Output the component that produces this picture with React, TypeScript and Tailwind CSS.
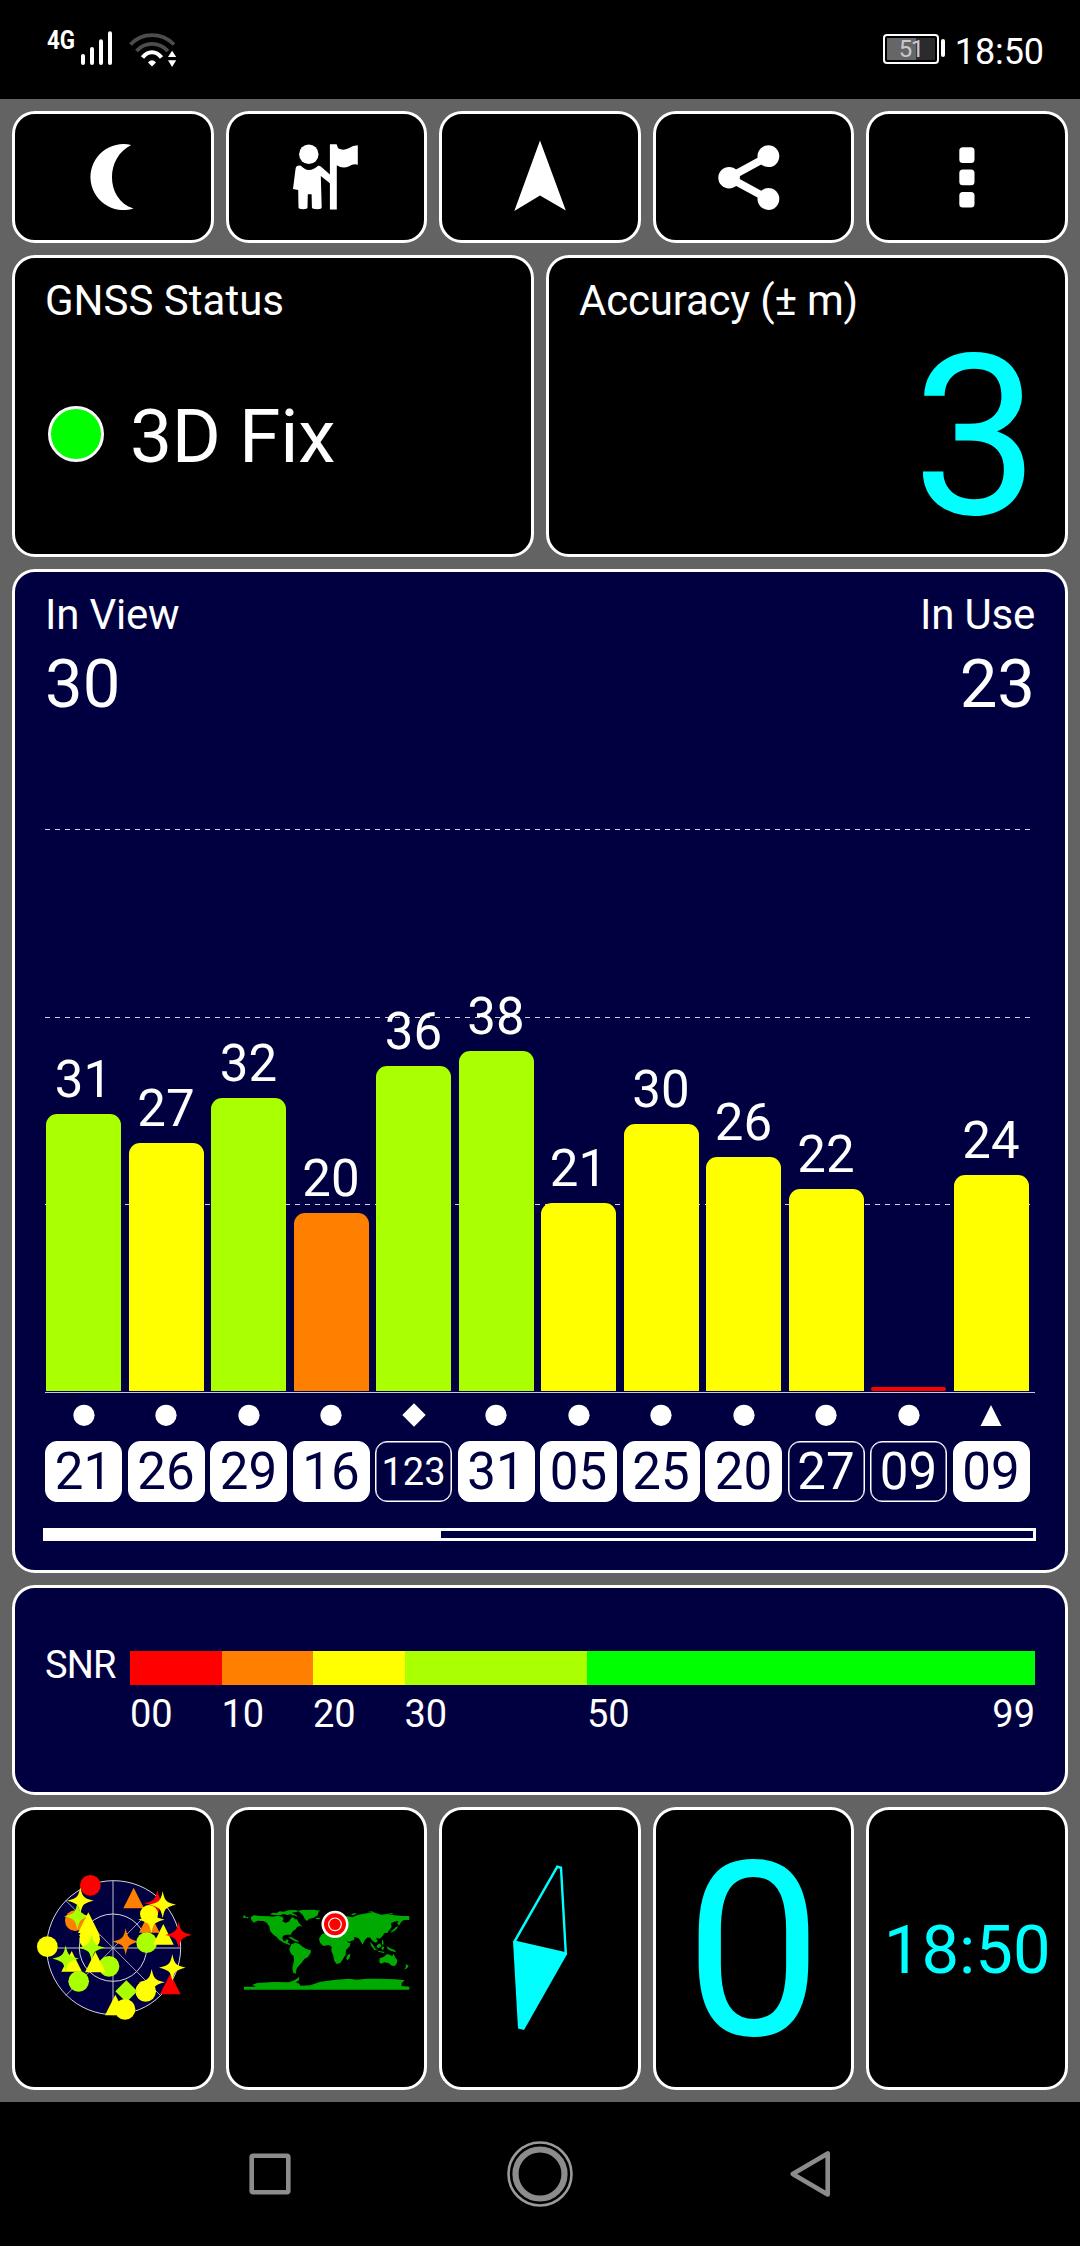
import type { ReactNode } from "react";
import clsx from "clsx";

type Shape = "circle" | "diamond" | "triangle";

const SATELLITES: {
  id: string;
  snr?: number;
  height: number;
  color: string;
  shape: Shape;
  used: boolean;
}[] = [
  { id: "21", snr: 31, height: 277, color: "bg-[#aaff00]", shape: "circle", used: true },
  { id: "26", snr: 27, height: 248, color: "bg-[#ffff00]", shape: "circle", used: true },
  { id: "29", snr: 32, height: 293, color: "bg-[#aaff00]", shape: "circle", used: true },
  { id: "16", snr: 20, height: 178, color: "bg-[#ff8000]", shape: "circle", used: true },
  { id: "123", snr: 36, height: 325, color: "bg-[#aaff00]", shape: "diamond", used: false },
  { id: "31", snr: 38, height: 340, color: "bg-[#aaff00]", shape: "circle", used: true },
  { id: "05", snr: 21, height: 188, color: "bg-[#ffff00]", shape: "circle", used: true },
  { id: "25", snr: 30, height: 267, color: "bg-[#ffff00]", shape: "circle", used: true },
  { id: "20", snr: 26, height: 234, color: "bg-[#ffff00]", shape: "circle", used: true },
  { id: "27", snr: 22, height: 202, color: "bg-[#ffff00]", shape: "circle", used: false },
  { id: "09", height: 4, color: "bg-[#ff0000]", shape: "circle", used: false },
  { id: "09", snr: 24, height: 216, color: "bg-[#ffff00]", shape: "triangle", used: true },
];

const SNR_SCALE = [
  { from: "00", width: "w-[91.5px]", color: "bg-[#ff0000]" },
  { from: "10", width: "w-[91.5px]", color: "bg-[#ff8000]" },
  { from: "20", width: "w-[91.5px]", color: "bg-[#ffff00]" },
  { from: "30", width: "w-[182.5px]", color: "bg-[#aaff00]" },
  { from: "50", width: "flex-1", color: "bg-[#00ff00]" },
];

const RED = "#ff0000";
const ORANGE = "#ff8000";
const YELLOW = "#ffff00";
const LIME = "#aaff00";

// sky plot symbols, drawn back to front: kind, x, y, colour
const SKY: [string, number, number, string, number?][] = [
  ["circle", 210, 137, RED],
  ["triangle", 340, 175, ORANGE],
  ["star", 411, 191, RED],
  ["circle", 165, 243, ORANGE],
  ["star", 427, 195, YELLOW],
  ["triangle", 387, 248, ORANGE],
  ["circle", 386, 223, YELLOW, 27],
  ["star", 393, 240, YELLOW],
  ["star", 180, 183, YELLOW],
  ["star", 171, 230, LIME],
  ["circle", 208, 298, YELLOW],
  ["triangle", 204, 249, YELLOW],
  ["triangle", 207, 258, YELLOW],
  ["star", 214, 324, LIME],
  ["star", 316, 306, ORANGE],
  ["circle", 379, 309, LIME],
  ["triangle", 429, 284, YELLOW],
  ["star", 475, 286, RED],
  ["circle", 81, 321, YELLOW],
  ["triangle", 154, 365, YELLOW],
  ["star", 136, 357, LIME],
  ["circle", 175, 425, LIME],
  ["circle", 266, 380, LIME],
  ["triangle", 225, 367, YELLOW],
  ["triangle", 450, 433, RED],
  ["star", 456, 384, YELLOW],
  ["star", 394, 428, YELLOW],
  ["circle", 376, 455, YELLOW],
  ["diamond", 318, 455, LIME],
  ["triangle", 285, 496, YELLOW],
  ["circle", 314, 509, YELLOW],
];

function Card({ className, children }: { className?: string; children: ReactNode }) {
  return (
    <div className={clsx("rounded-[23px] border-[3px] border-white", className)}>{children}</div>
  );
}

function StatusBar() {
  return (
    <header className="flex h-[99px] shrink-0 items-start justify-between bg-black pr-[36px] pl-[47px]">
      <div className="flex items-start pt-[27px]">
        <span className="w-[34px] origin-left scale-x-[0.86] text-[26px] leading-none font-bold">
          4G
        </span>
        <svg width="28" height="35" viewBox="81 31 28 35" className="mt-[4px] overflow-visible">
          <g stroke="#fff" strokeWidth="4" strokeLinecap="round">
            <path d="M83 56V63M92 49V63M101 41.200V63M110 33.200V63" />
          </g>
        </svg>
        <svg width="48" height="36" viewBox="129 32 48 36" className="mt-[5px] ml-[20px]">
          <g fill="none" strokeWidth="3.800">
            <path d="M130.500 44.500C142 32 162 32 174 44.500" stroke="#4d4d4d" />
            <path d="M136.500 51C145 41.500 159 41.500 168 51" stroke="#4d4d4d" />
            <path d="M142.500 57.500C148 50.500 156 50.500 161.500 57.500" stroke="#fff" strokeWidth="4.200" />
          </g>
          <path d="M148 62.500Q152 58 156 62.500L152 66.500ZM168 57h8.200l-4.100-6.300ZM168 60.200h8.200l-4.100 6.800Z" fill="#fff" />
        </svg>
      </div>
      <div className="flex items-start pt-[34px]">
        <div className="flex h-[30px] w-[56px] rounded-[4px] border-2 border-white p-[2px]">
          <div className="flex flex-1 items-center justify-center bg-[linear-gradient(90deg,#666_61%,#2b2b2e_61%)] text-[24px] leading-none tracking-[-1.5px] text-[#c8c8d0]">
            51
          </div>
        </div>
        <div className="mt-[5px] ml-[2px] h-[18px] w-[4px] rounded-[2px] bg-white" />
        <span className="ml-[10px] text-[36px] leading-none tracking-[-0.1px]">18:50</span>
      </div>
    </header>
  );
}

function Toolbar() {
  const card = "flex flex-1 items-center justify-center bg-black";
  return (
    <div className="flex h-[132px] gap-[12px]">
      <Card className={card}>
        <svg width="80" height="80" viewBox="72.800 137 80 80" fill="#fff">
          <path d="M131 145A33 33 0 1 0 133.300 208.500C105.500 200 104.500 158 131 145Z" />
        </svg>
      </Card>
      <Card className={card}>
        <svg width="80" height="80" viewBox="286.400 137 80 80" fill="#fff">
          <ellipse cx="309.200" cy="154.300" rx="9.700" ry="9.800" />
          <path d="M301.300 165.700C304 168 306 170 309.300 170C313 170 315.500 168 318.500 165.700Q320 165.500 321.200 166.600L330.600 174.800V183.500L321.200 176L322.100 207Q322.200 209.200 318 209.200Q312.400 209.200 312.300 207.500L312 194.300H308.200L307.900 207.500Q307.800 209.200 303.500 209.200Q299 209.200 298.900 207.500L298.600 190L293.400 189L296 168.500Q296.500 165 301.300 165.700Z" />
          <path d="M330.300 144.300H337L338.500 148.300Q343.500 151.200 349 148.300Q353.500 145.500 358.200 145.300V164.700Q353.500 163.500 349.500 166.300Q343 169.200 337.200 165.300V209.600H330.300Z" />
        </svg>
      </Card>
      <Card className={card}>
        <svg width="80" height="80" viewBox="500 137 80 80" fill="#fff">
          <path d="M540 140.500L565.800 210.400L540 195.500L514.300 211Z" />
        </svg>
      </Card>
      <Card className={card}>
        <svg width="80" height="80" viewBox="713.600 137 80 80" fill="#fff">
          <path d="M768 156.200L728.700 177.700L768 199" fill="none" stroke="#fff" strokeWidth="7.800" />
          <circle cx="728.700" cy="177.700" r="10.800" />
          <circle cx="768" cy="156.200" r="10.900" />
          <circle cx="768" cy="199" r="10.900" />
        </svg>
      </Card>
      <Card className={card}>
        <svg width="80" height="80" viewBox="927.200 137 80 80" fill="#fff">
          <rect x="959.500" y="147.300" width="15.200" height="15.700" rx="3.500" />
          <rect x="959.500" y="169.600" width="15.200" height="15.700" rx="3.500" />
          <rect x="959.500" y="191.900" width="15.200" height="15.700" rx="3.500" />
        </svg>
      </Card>
    </div>
  );
}

function Marker({ shape }: { shape: Shape }) {
  return (
    <svg width="24" height="24" viewBox="0 0 24 24" fill="#fff">
      {shape === "circle" && <circle cx="12" cy="12.300" r="10.600" />}
      {shape === "diamond" && <path d="M12 .3L23.700 12L12 23.700L.3 12Z" />}
      {shape === "triangle" && <path d="M12 2L22.500 22.900H1.500Z" />}
    </svg>
  );
}

function SignalChart() {
  const dash =
    "absolute left-0 h-px w-[985px] bg-[repeating-linear-gradient(90deg,#d0d0dc_0_5px,transparent_5px_10px)]";
  return (
    <Card className="h-[1003.5px] bg-[#000040] px-[28px] pt-[22px]">
      <div className="flex justify-between px-[2px] text-[42px] leading-none tracking-[-0.2px]">
        <span>In View</span>
        <span>In Use</span>
      </div>
      <div className="mt-[15px] flex justify-between px-[2px] text-[67px] leading-none">
        <span>30</span>
        <span>23</span>
      </div>
      <div className="relative mx-[2px] mt-[34px] flex h-[641px] items-end gap-[5.5px] border-b border-[#c8c8d4] pb-px">
        <div className={clsx(dash, "top-[77px]")} />
        <div className={clsx(dash, "top-[265px]")} />
        <div className={clsx(dash, "top-[452px]")} />
        {SATELLITES.map((s, i) => (
          <div key={i} className="relative flex w-[77px] flex-col items-center px-px">
            {s.snr && <span className="mb-[9px] text-[51px] leading-none">{s.snr}</span>}
            <div
              className={clsx("w-full", s.snr ? "rounded-t-[11px]" : "rounded-[2px]", s.color)}
              style={{ height: s.height }}
            />
          </div>
        ))}
      </div>
      <div className="mx-[2px] mt-[10px] flex gap-[5.5px]">
        {SATELLITES.map((s, i) => (
          <div key={i} className="flex w-[77px] flex-col items-center">
            <Marker shape={s.shape} />
            <div
              className={clsx(
                "mt-[14px] flex h-[61px] w-full items-center justify-center rounded-[12px] border border-white leading-none",
                s.used
                  ? "bg-white text-[#000040]"
                  : "text-white shadow-[inset_0_0_0_0.5px_#ffffff]",
                s.id.length > 2 ? "text-[38px]" : "text-[51px]"
              )}
            >
              {s.id}
            </div>
          </div>
        ))}
      </div>
      <div className="mt-[26px] h-[13px] w-[993px] border-[3px] border-white">
        <div className="h-full w-[395px] bg-white" />
      </div>
    </Card>
  );
}

function SnrLegend() {
  return (
    <Card className="flex h-[210px] bg-[#000040] px-[30px] pt-[57px] text-[38px] leading-none">
      <span className="w-[85px] pt-px tracking-[-0.8px]">SNR</span>
      <div className="flex-1 pt-[6px]">
        <div className="flex h-[34px]">
          {SNR_SCALE.map((s) => (
            <div key={s.from} className={clsx(s.width, s.color)} />
          ))}
        </div>
        <div className="mt-[10px] flex">
          {SNR_SCALE.map((s) => (
            <span key={s.from} className={s.width}>
              {s.from}
            </span>
          ))}
          <span>99</span>
        </div>
      </div>
    </Card>
  );
}

function SkySymbol({ kind, color, r = 31 }: { kind: string; color: string; r?: number }) {
  if (kind === "circle") return <circle r={r} fill={color} />;
  if (kind === "triangle") return <path d="M0-31L31 31H-31Z" fill={color} />;
  if (kind === "diamond") return <path d="M0-33L33 0L0 33L-33 0Z" fill={color} />;
  return (
    <path d="M0-40Q5-15 12-11Q18-5 40 0Q18 5 12 11Q5 15 0 40Q-5 15-12 11Q-18 5-40 0Q-18-5-12-11Q-5-15 0-40Z" fill={color} />
  );
}

function SkyPlot() {
  return (
    <svg width="160" height="160" viewBox="38 85 480 480">
      <g stroke="#fff" strokeWidth="2.500" fill="none">
        <circle cx="280" cy="324" r="201" fill="#000040" />
        <circle cx="278" cy="324" r="101" />
        <path d="M78 325H481M278 123V526" stroke="#c0c0cc" strokeWidth="3" />
        <path d="M136 182L421 468M136 468L421 182" stroke="#c0c0cc" />
      </g>
      {SKY.map(([kind, x, y, color, r], i) => (
        <g key={i} transform={`translate(${x} ${y})`}>
          <SkySymbol kind={kind} color={color} r={r} />
        </g>
      ))}
    </svg>
  );
}

function WorldMap() {
  return (
    <svg width="173.333" height="96.667" viewBox="59 180 520 290">
      <g fill="#00aa00">
        {/* north america */}
        <path d="M92 231L100 226L120 228L145 229L158 230L172 227L186 230L190 236L186 244L196 249L207 244L212 234L220 231L231 240L236 249L246 260L239 258L230 261L226 268L217 274L211 284L199 284L191 286L186 292L188 301L194 304L200 298L205 300L202 308L211 312L207 315L190 308L177 300L169 291L159 284L150 274L147 260L140 249L130 243L112 242L100 248L93 240Z" />
        <path d="M148 223L158 218L168 220L178 214L190 215L204 211L222 210L236 212L228 216L214 218L224 223L232 229L224 230L212 223L200 225L190 222L178 226L164 225Z" />
        <path d="M69 226L76 228L76 234L69 234ZM78 231H84V235H78Z" />
        {/* greenland and iceland */}
        <path d="M233 213L245 210L282 209L296 212L292 226L280 233L266 237L260 243L254 238L248 226L240 218Z" />
        <path d="M285 234L298 233L300 237L290 238ZM292 212L301 211L297 214Z" />
        {/* caribbean */}
        <path d="M203 290L214 292L224 298L234 303L237 307L224 304L212 297Z" />
        {/* south america */}
        <path d="M213 313L225 308L236 311L247 320L258 327L272 331L271 339L263 351L252 357L244 368L237 376L230 384L226 397L228 401L219 399L216 384L221 362L220 349L211 340L207 328Z" />
        {/* africa */}
        <path d="M303 284L316 277L342 276L357 284L370 288L377 300L384 309L391 308L388 319L377 330L376 344L366 360L360 369L349 372L342 363L339 347L333 333L334 320L326 315L309 318L299 308L296 296Z" />
        <path d="M382 345L390 341L388 354L381 361L378 355Z" />
        {/* europe and asia */}
        <path d="M318 265L326 257L336 250L350 237L365 230L382 229L396 232L410 226L426 222L445 219L460 217L482 224L502 222L522 226L548 228L567 228L567 240L550 240L542 247L536 257L531 250L535 242L522 245L512 249L514 261L508 270L502 278L492 279L487 288L478 296L467 293L472 304L466 308L456 302L450 293L442 292L433 301L427 314L420 302L414 294L399 290L390 281L402 292L401 299L386 306L377 301L368 285L362 277L350 270L340 277L331 276L321 275Z" />
        <path d="M391 225L399 220L411 220L400 225ZM440 216L456 214L461 218ZM500 220L519 220L515 223Z" />
        <path d="M534 259L529 267L521 274L512 278L508 274L518 270L527 261Z" />
        {/* south east asia and oceania */}
        <path d="M449 305L459 315L465 327L475 331L462 330L453 318ZM470 315L480 310L483 319L475 325L469 321ZM486 297L490 308L488 318L484 308ZM486 319L492 322L488 331L483 326ZM499 318L509 325L523 330L528 337L513 333L502 328ZM473 332L493 336L490 339L474 335Z" />
        <path d="M478 355L491 350L500 342L510 345L515 349L520 341L524 351L531 361L529 371L523 378L514 377L506 370L493 367L481 371L477 366Z" />
        <path d="M556 372L565 377L561 384L551 389L557 380Z" />
        {/* antarctica */}
        <path d="M71 440L107 440L96 434L111 429L160 426L206 427L222 421L237 410L236 421L226 427L237 431L240 437L270 436L300 425L340 420L386 416L410 419L440 416L480 416L525 418L553 421L544 429L544 438L567 440V449H71Z" />
      </g>
      <path d="M190 229L196 237L203 241L205 235L198 229ZM221 224L218 232L226 239L228 230Z" fill="#000" />
      <path d="M456 309L462 319M503 273L520 277M212 414L232 414" stroke="#000" strokeWidth="2" />
      <circle cx="344" cy="253" r="40.500" fill="#fff" />
      <circle cx="344" cy="253" r="33" fill="#ff0000" />
      <circle cx="344" cy="253" r="19" fill="none" stroke="#fff" strokeWidth="3.500" />
    </svg>
  );
}

function Shortcuts() {
  const card = "flex flex-1 items-center justify-center bg-black text-[#00ffff]";
  return (
    <div className="flex h-[283.5px] gap-[12px]">
      <Card className={card}>
        <SkyPlot />
      </Card>
      <Card className={card}>
        <WorldMap />
      </Card>
      <Card className={card}>
        <svg width="80" height="180" viewBox="500 1858.250 80 180">
          <path d="M557.300 1867L561 1868L565.800 1953.700L514.500 1941.800Z" fill="none" stroke="#0ff" strokeWidth="2.400" />
          <path d="M513 1941.500L567 1954.500L524 2030.300L518 2028.800Z" fill="#0ff" />
        </svg>
      </Card>
      <Card className={card}>
        <span className="pt-[7px] text-[244px] leading-none">0</span>
      </Card>
      <Card className={card}>
        <span className="pt-[4px] text-[67px] leading-none">18:50</span>
      </Card>
    </div>
  );
}

function NavBar() {
  return (
    <nav className="flex h-[144px] shrink-0 items-center justify-around bg-black px-[135px]">
      <svg width="70" height="70" viewBox="-35 -35 70 70" fill="none" stroke="#8c8c8c">
        <rect x="-18.300" y="-18.300" width="36.600" height="36.600" rx="1.500" strokeWidth="4.600" />
      </svg>
      <svg width="70" height="70" viewBox="-35 -35 70 70" fill="none" stroke="#8c8c8c">
        <circle r="31.500" strokeWidth="2.600" stroke="#9a9a9a" />
        <circle r="24.500" strokeWidth="6.200" />
      </svg>
      <svg width="70" height="70" viewBox="-35 -35 70 70" fill="none" stroke="#8c8c8c">
        <path d="M17.700-20.500V20.500L-17.300 0Z" strokeWidth="4.600" strokeLinejoin="round" />
      </svg>
    </nav>
  );
}

export default function App() {
  return (
    <div className="flex h-[2246px] w-[1080px] flex-col overflow-hidden bg-[#636363] font-[Roboto,sans-serif] text-white">
      <StatusBar />
      <main className="flex flex-1 flex-col gap-[12px] p-[12px]">
        <Toolbar />
        <div className="grid h-[302px] grid-cols-2 gap-[12px]">
          <Card className="bg-black px-[30px] pt-[22px]">
            <h2 className="text-[42px] leading-none">GNSS Status</h2>
            <div className="mt-[77px] flex items-start pl-[3px]">
              <div className="mt-[7px] size-[56px] rounded-full border-[3px] border-white bg-[#00ff00]" />
              <span className="ml-[26px] text-[75px] leading-none tracking-[-0.3px]">3D Fix</span>
            </div>
          </Card>
          <Card className="bg-black pt-[22px] pr-[26px] pl-[30px]">
            <h2 className="text-[42px] leading-none tracking-[-0.2px]">Accuracy (± m)</h2>
            <p className="mt-[3px] text-right text-[225px] leading-none text-[#00ffff]">3</p>
          </Card>
        </div>
        <SignalChart />
        <SnrLegend />
        <Shortcuts />
      </main>
      <NavBar />
    </div>
  );
}
